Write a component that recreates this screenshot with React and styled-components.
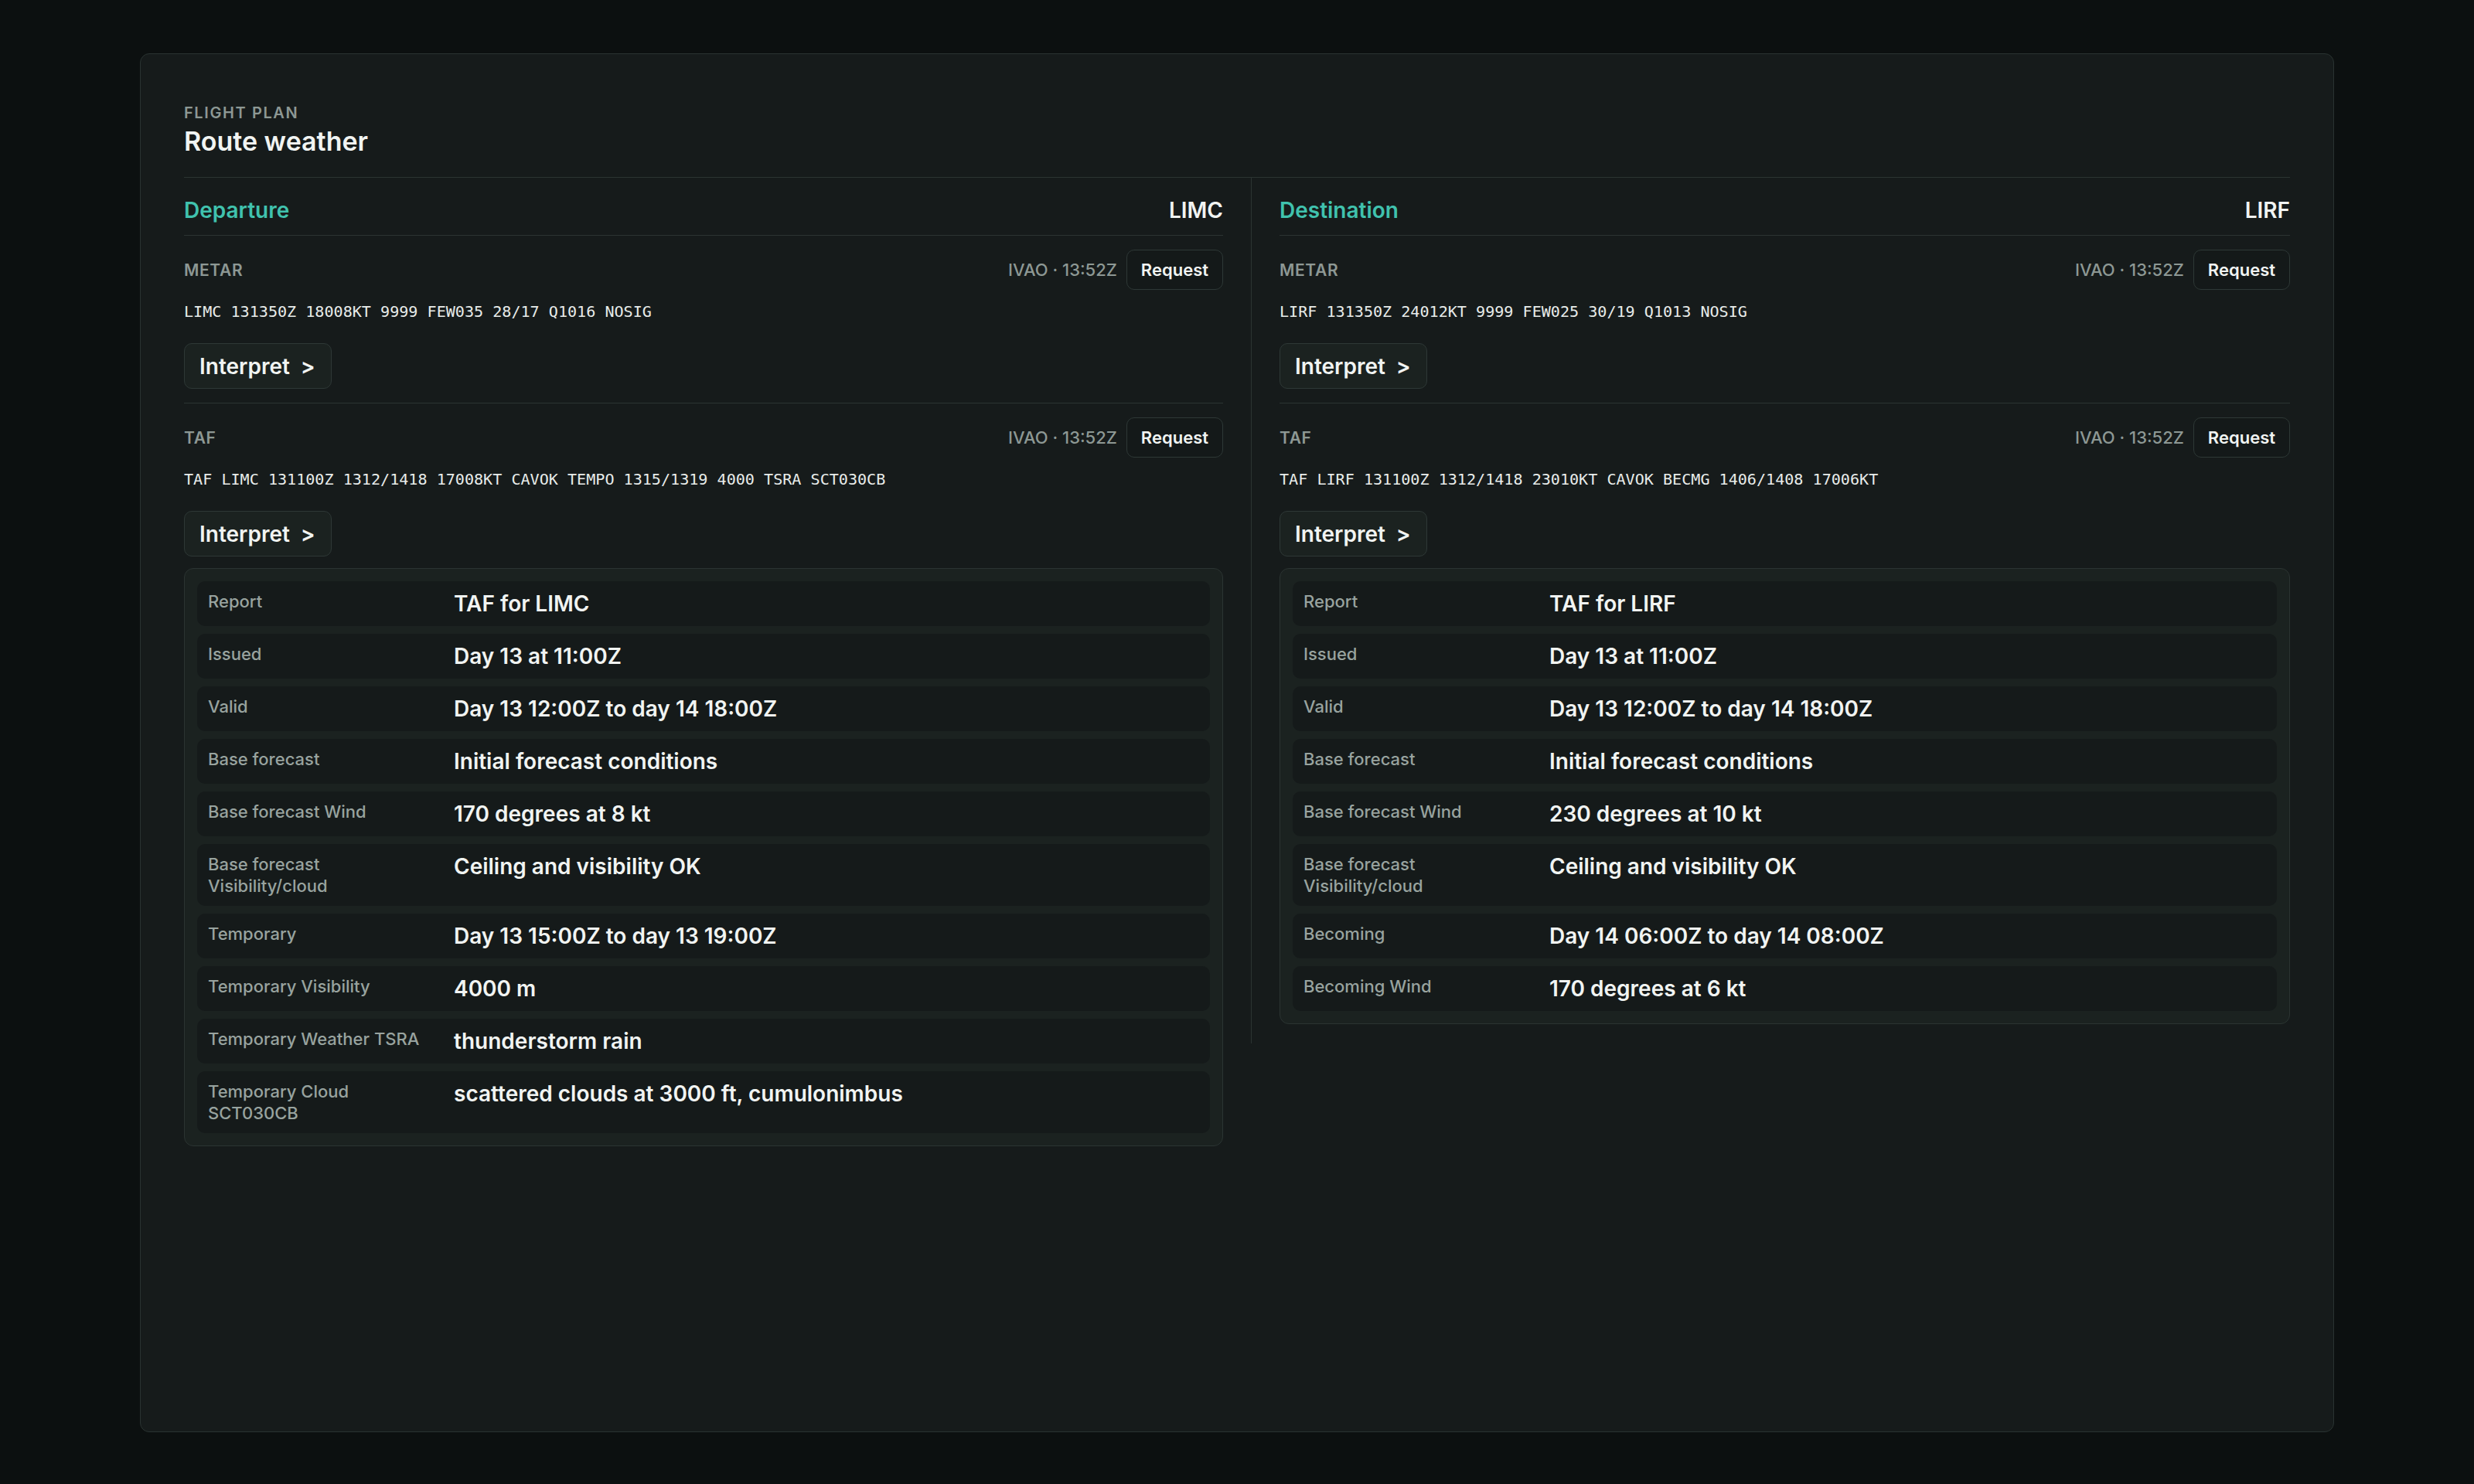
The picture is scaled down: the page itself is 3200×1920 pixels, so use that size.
import React from 'react';
import styled, { createGlobalStyle } from 'styled-components';

const GlobalStyle = createGlobalStyle`
  * { box-sizing: border-box; }
  html, body { margin: 0; padding: 0; background: #0c1010; }
  body {
    font-family: Inter, "Noto Sans", "Liberation Sans", sans-serif;
    color: #eef2f0;
    -webkit-font-smoothing: antialiased;
  }
`;

const Page = styled.div`
  min-height: 100vh;
  padding: 69px 181px 67px;
  display: flex;
`;

const Card = styled.section`
  flex: 1;
  height: calc(100vh - 136px);
  background: #161b1b;
  border: 1px solid #2a3331;
  border-radius: 12px;
  padding: 64px 56px 56px;
  display: flex;
  flex-direction: column;
`;

const Header = styled.header`
  padding-bottom: 25px;
  border-bottom: 1px solid #2b3432;
`;

const Eyebrow = styled.div`
  font-size: 20px;
  line-height: 24px;
  font-weight: 600;
  letter-spacing: 0.08em;
  text-transform: uppercase;
  color: #8d9894;
`;

const Title = styled.h1`
  margin: 4px 0 0;
  font-size: 34px;
  line-height: 42px;
  font-weight: 600;
  color: #f1f4f2;
`;

const Columns = styled.div`
  display: grid;
  grid-template-columns: 1fr 1fr;
  column-gap: 36px;
  align-items: start;
`;

const Column = styled.div`
  padding: 25px 0 7px;
  ${p => p.$divided && `
    border-left: 1px solid #2b3432;
    padding-left: 36px;
  `}
`;

const ColumnHead = styled.div`
  display: flex;
  justify-content: space-between;
  align-items: center;
  padding-bottom: 15px;
  border-bottom: 1px solid #2b3432;
  font-size: 28px;
  line-height: 34px;
  font-weight: 600;
`;

const Role = styled.span`
  color: #40c2ae;
`;

const Icao = styled.span`
  color: #f1f4f2;
`;

const Report = styled.div`
  padding: 18px 0;
  ${p => p.$last ? '' : 'border-bottom: 1px solid #2b3432;'}
`;

const ReportHead = styled.div`
  display: flex;
  align-items: center;
  justify-content: space-between;
  height: 52px;
`;

const Kind = styled.span`
  font-size: 21px;
  font-weight: 600;
  letter-spacing: 0.03em;
  color: #8d9894;
`;

const Actions = styled.div`
  display: flex;
  align-items: center;
  gap: 12px;
`;

const Source = styled.span`
  font-size: 22px;
  font-weight: 500;
  color: #8d9894;
`;

const RequestButton = styled.button`
  height: 52px;
  padding: 0 18px;
  background: #141919;
  border: 1.5px solid #2e3836;
  border-radius: 10px;
  color: #f1f4f2;
  font-family: inherit;
  font-size: 22px;
  font-weight: 600;
`;

const Code = styled.pre`
  margin: 14px 0 0;
  font-family: "DejaVu Sans Mono", "Liberation Mono", monospace;
  font-size: 20.1px;
  line-height: 28px;
  color: #e8ecea;
`;

const InterpretButton = styled.button`
  margin-top: 27px;
  height: 59px;
  padding: 0 20px 0 19px;
  display: inline-flex;
  align-items: center;
  gap: 14px;
  background: #1b2220;
  border: 1.5px solid #2e3836;
  border-radius: 10px;
  color: #f1f4f2;
  font-family: inherit;
  font-size: 28px;
  font-weight: 600;
`;

const Decoded = styled.div`
  margin-top: 15px;
  padding: 16px;
  background: #1b2220;
  border: 1px solid #2b3432;
  border-radius: 12px;
  display: flex;
  flex-direction: column;
  gap: 10px;
`;

const Row = styled.div`
  display: grid;
  grid-template-columns: 300px 1fr;
  column-gap: 18px;
  align-items: start;
  padding: 12px 14px;
  background: #151a1a;
  border-radius: 10px;
`;

const RowLabel = styled.div`
  font-size: 22px;
  line-height: 28px;
  font-weight: 500;
  color: #98a39f;
`;

const RowValue = styled.div`
  font-size: 28px;
  line-height: 34px;
  font-weight: 600;
  color: #f1f4f2;
`;

const stations = [
  {
    role: 'Departure',
    icao: 'LIMC',
    metar: 'LIMC 131350Z 18008KT 9999 FEW035 28/17 Q1016 NOSIG',
    taf: 'TAF LIMC 131100Z 1312/1418 17008KT CAVOK TEMPO 1315/1319 4000 TSRA SCT030CB',
    decoded: [
      ['Report', 'TAF for LIMC'],
      ['Issued', 'Day 13 at 11:00Z'],
      ['Valid', 'Day 13 12:00Z to day 14 18:00Z'],
      ['Base forecast', 'Initial forecast conditions'],
      ['Base forecast Wind', '170 degrees at 8 kt'],
      ['Base forecast Visibility/cloud', 'Ceiling and visibility OK'],
      ['Temporary', 'Day 13 15:00Z to day 13 19:00Z'],
      ['Temporary Visibility', '4000 m'],
      ['Temporary Weather TSRA', 'thunderstorm rain'],
      ['Temporary Cloud SCT030CB', 'scattered clouds at 3000 ft, cumulonimbus'],
    ],
  },
  {
    role: 'Destination',
    icao: 'LIRF',
    metar: 'LIRF 131350Z 24012KT 9999 FEW025 30/19 Q1013 NOSIG',
    taf: 'TAF LIRF 131100Z 1312/1418 23010KT CAVOK BECMG 1406/1408 17006KT',
    decoded: [
      ['Report', 'TAF for LIRF'],
      ['Issued', 'Day 13 at 11:00Z'],
      ['Valid', 'Day 13 12:00Z to day 14 18:00Z'],
      ['Base forecast', 'Initial forecast conditions'],
      ['Base forecast Wind', '230 degrees at 10 kt'],
      ['Base forecast Visibility/cloud', 'Ceiling and visibility OK'],
      ['Becoming', 'Day 14 06:00Z to day 14 08:00Z'],
      ['Becoming Wind', '170 degrees at 6 kt'],
    ],
  },
];

const ReportBlock = ({ kind, code, last, children }) => (
  <Report $last={last}>
    <ReportHead>
      <Kind>{kind}</Kind>
      <Actions>
        <Source>IVAO · 13:52Z</Source>
        <RequestButton>Request</RequestButton>
      </Actions>
    </ReportHead>
    <Code>{code}</Code>
    <InterpretButton>
      Interpret <span>&gt;</span>
    </InterpretButton>
    {children}
  </Report>
);

const App = () => (
  <>
    <GlobalStyle />
    <Page>
      <Card>
        <Header>
          <Eyebrow>Flight plan</Eyebrow>
          <Title>Route weather</Title>
        </Header>
        <Columns>
          {stations.map((s, i) => (
            <Column key={s.icao} $divided={i > 0}>
              <ColumnHead>
                <Role>{s.role}</Role>
                <Icao>{s.icao}</Icao>
              </ColumnHead>
              <ReportBlock kind="METAR" code={s.metar} />
              <ReportBlock kind="TAF" code={s.taf} last>
                <Decoded>
                  {s.decoded.map(([label, value]) => (
                    <Row key={label}>
                      <RowLabel>{label}</RowLabel>
                      <RowValue>{value}</RowValue>
                    </Row>
                  ))}
                </Decoded>
              </ReportBlock>
            </Column>
          ))}
        </Columns>
      </Card>
    </Page>
  </>
);

export default App;
